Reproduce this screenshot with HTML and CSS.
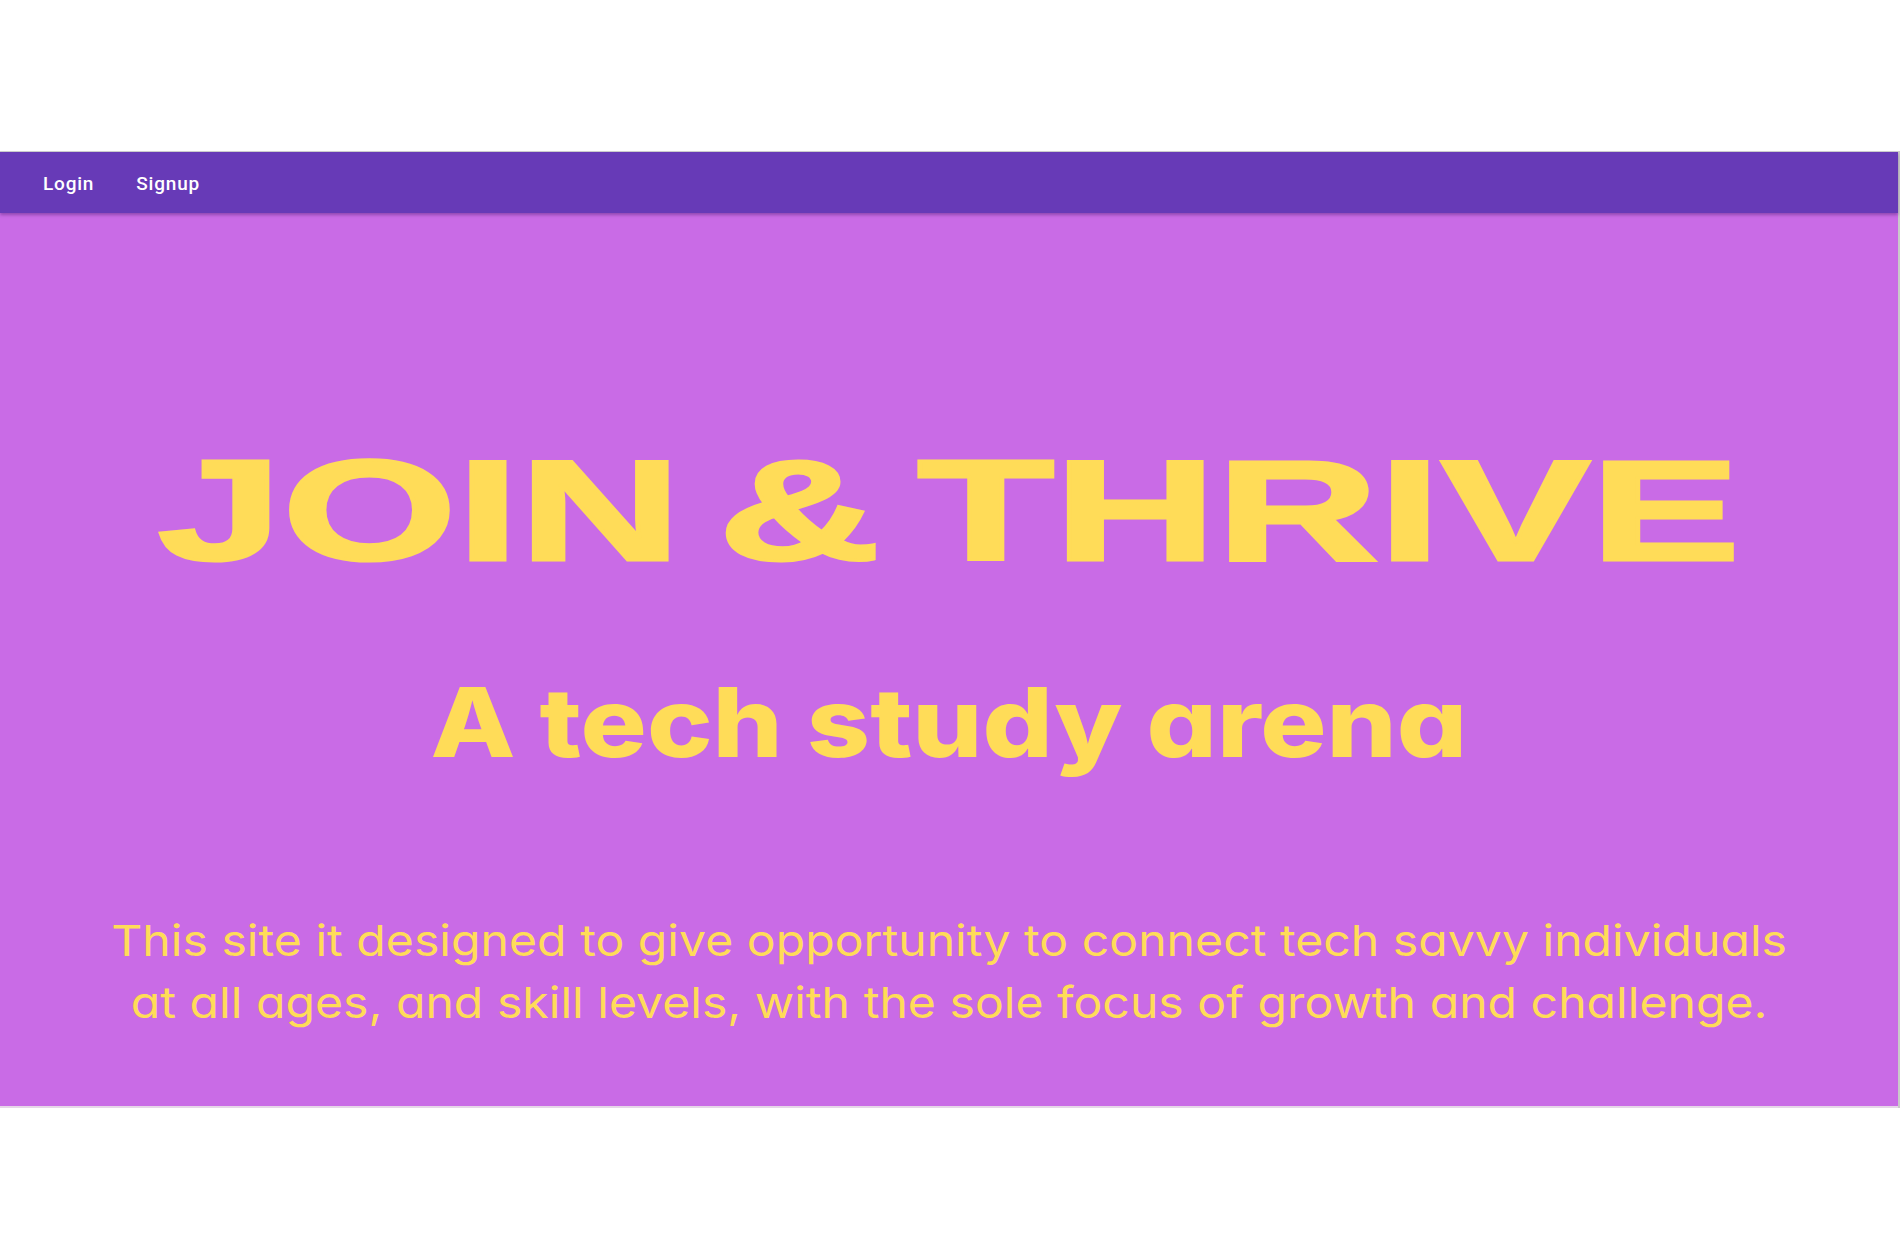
FILE: index.html
```html
<!DOCTYPE html>
<html lang="en">
<head>
<meta charset="utf-8">
<title>Join &amp; Thrive</title>
<link rel="stylesheet" href="styles.css">
</head>
<body>
<div class="frame">
  <nav class="topbar">
    <a class="nav-link" href="#">Login</a>
    <a class="nav-link" href="#">Signup</a>
  </nav>
  <main class="hero">
    <h1 class="hero-title"><span class="stretch">JOIN &amp; THRIVE</span></h1>
    <h2 class="hero-sub"><span class="widen">A tech study arena</span></h2>
    <p class="hero-text"><span class="widen-text">This site it designed to give opportunity to connect tech savvy individuals<br>at all ages, and skill levels, with the sole focus of growth and challenge.</span></p>
  </main>
</div>
</body>
</html>
```

FILE: styles.css
```css
html, body {
  margin: 0;
  padding: 0;
  background: #ffffff;
}

.frame {
  margin-top: 151px;
  width: 1898px;
  border-top: 1px solid #cfcfcf;
  border-right: 2px solid #c9c9c9;
  box-sizing: content-box;
}

.topbar {
  height: 61px;
  background: #673ab7;
  display: flex;
  align-items: center;
  gap: 42px;
  padding-left: 43px;
  box-shadow: 0 2px 3px rgba(40, 10, 80, 0.35);
  position: relative;
  z-index: 1;
}

.nav-link {
  font-family: Roboto, "Liberation Sans", sans-serif;
  font-weight: 500;
  font-size: 19px;
  letter-spacing: 0.8px;
  color: #ffffff;
  text-decoration: none;
  line-height: 1;
  padding-top: 1px;
}

.hero {
  background: #c96be6;
  padding: 227px 0 73px;
  text-align: center;
  color: #ffdc58;
  border-bottom: 2px solid #e6d6e8;
}

.hero-title {
  margin: 0;
  font-family: "Liberation Sans", Arial, sans-serif;
  font-weight: 700;
  font-size: 142px;
  line-height: 1;
  height: 142px;
  word-spacing: -16px;
}

.stretch {
  display: inline-block;
  transform: scaleX(1.58);
  transform-origin: center;
  white-space: nowrap;
  -webkit-text-stroke: 3px #ffdc58;
}

.hero-sub {
  margin: 92px 0 0;
  font-family: Inter, "Noto Sans", sans-serif;
  font-weight: 800;
  font-size: 96px;
  line-height: 1;
  font-feature-settings: "cv11" 1;
}

.widen {
  display: inline-block;
  transform: scaleX(1.15);
  transform-origin: center;
  white-space: nowrap;
}

.hero-text {
  margin: 139px 0 0;
  font-family: Inter, "Noto Sans", sans-serif;
  font-weight: 400;
  font-size: 43px;
  line-height: 62px;
  font-feature-settings: "cv11" 1;
}

.widen-text {
  display: inline-block;
  transform: scaleX(1.12);
  transform-origin: center;
  white-space: nowrap;
}
```
